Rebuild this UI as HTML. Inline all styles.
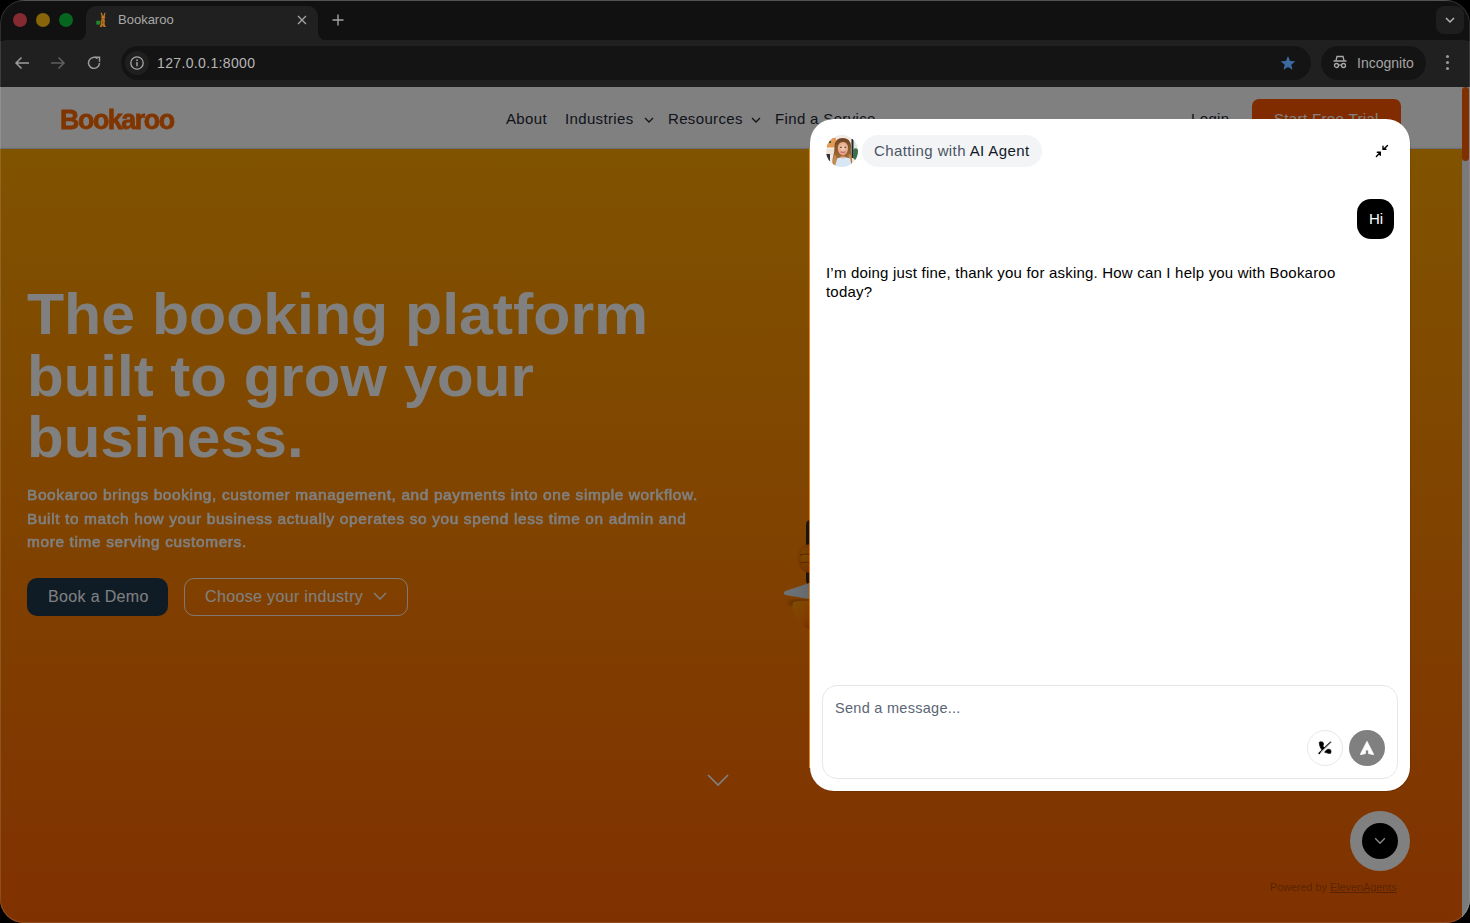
<!DOCTYPE html>
<html><head><meta charset="utf-8">
<style>
*{box-sizing:border-box;margin:0;padding:0}
html,body{width:1470px;height:923px;overflow:hidden;background:#000;font-family:"Liberation Sans",sans-serif}
.win{position:absolute;left:0;top:0;width:1470px;height:923px;border-radius:24px;overflow:hidden;background:#202020}
.abs{position:absolute}
/* chrome */
.tabstrip{left:0;top:0;width:1470px;height:41px;background:#111;border-top:1px solid #3a3a3a}
.tab{left:86px;top:6px;width:232px;height:35px;background:#202020;border-radius:10px 10px 0 0}
.toolbar{left:0;top:40px;width:1470px;height:47px;background:#202020;border-radius:6px 6px 0 0}
.omni{left:121px;top:46px;width:1190px;height:34px;background:#141414;border-radius:17px}
.page{left:0;top:87px;width:1470px;height:836px;overflow:hidden}
.nav{font-size:15px;color:#1f2937;line-height:16px;white-space:nowrap;letter-spacing:.35px}
.h1{font-size:57px;font-weight:700;color:#fff;line-height:62px;white-space:nowrap}
.para{font-size:14.8px;font-weight:400;color:#fff;line-height:20px;white-space:nowrap;letter-spacing:.62px;-webkit-text-stroke:.55px #fff;transform:scaleX(1.04);transform-origin:0 0}
.btxt{font-size:16px;color:#fff;line-height:20px;white-space:nowrap;letter-spacing:.35px}
.wt{font-size:15px;line-height:16px;white-space:nowrap}
.overlay{left:0;top:87px;width:1470px;height:836px;background:rgba(0,0,0,.498)}
</style></head>
<body>
<div class="win">

  <div class="abs tabstrip"></div>
  <div class="abs tab"></div>
  <!-- tab curves -->
  <div class="abs" style="left:76px;top:31px;width:10px;height:10px;background:radial-gradient(circle at 0 0,#111 10px,#202020 10.5px)"></div>
  <div class="abs" style="left:318px;top:31px;width:10px;height:10px;background:radial-gradient(circle at 100% 0,#111 10px,#202020 10.5px)"></div>
  <div class="abs" style="left:13px;top:13px;width:14px;height:14px;border-radius:50%;background:#852a30"></div>
  <div class="abs" style="left:36px;top:13px;width:14px;height:14px;border-radius:50%;background:#876508"></div>
  <div class="abs" style="left:59px;top:13px;width:14px;height:14px;border-radius:50%;background:#06651f"></div>
  <!-- favicon -->
  <svg class="abs" style="left:95px;top:12px" width="14" height="16" viewBox="0 0 14 16">
    <path d="M6.2 0.8 L7.3 4.2 M10 0.8 L9 4.2" stroke="#c27a22" stroke-width="1.2"/>
    <ellipse cx="8.2" cy="5.2" rx="1.9" ry="1.6" fill="#c27a22"/>
    <path d="M7 6.2 Q4.8 9 5.8 12.2 L4.6 15 H7 L7.6 13.4 L8.6 15 H11 L9.6 12 Q10.4 8.8 9.4 6.2Z" fill="#b8701c"/>
    <path d="M7.5 8.5 Q8 10.5 7.6 12" stroke="#7a4410" stroke-width=".8" fill="none"/>
    <rect x="1.3" y="8.8" width="3.8" height="3.8" fill="#1e8a2e"/>
  </svg>
  <div class="abs" style="left:118px;top:12px;font-size:13px;color:#a8a8a8;line-height:16px">Bookaroo</div>
  <svg class="abs" style="left:296px;top:14px" width="12" height="12" viewBox="0 0 12 12"><path d="M2 2L10 10M10 2L2 10" stroke="#a4a4a4" stroke-width="1.3"/></svg>
  <svg class="abs" style="left:331px;top:13px" width="14" height="14" viewBox="0 0 14 14"><path d="M7 1.5V12.5M1.5 7H12.5" stroke="#a4a4a4" stroke-width="1.4"/></svg>
  <div class="abs" style="left:1436px;top:6px;width:28px;height:28px;border-radius:8px;background:#1e1e1e"></div>
  <svg class="abs" style="left:1443px;top:13px" width="14" height="14" viewBox="0 0 14 14"><path d="M3 5L7 9L11 5" stroke="#b4b4b4" stroke-width="1.5" fill="none"/></svg>
  <div class="abs toolbar"></div>
  <!-- nav icons -->
  <svg class="abs" style="left:13px;top:54px" width="18" height="18" viewBox="0 0 18 18"><path d="M16 9H3M8.5 3.5L3 9L8.5 14.5" stroke="#9c9c9c" stroke-width="1.45" fill="none"/></svg>
  <svg class="abs" style="left:49px;top:54px" width="18" height="18" viewBox="0 0 18 18"><path d="M2 9H15M9.5 3.5L15 9L9.5 14.5" stroke="#5e5e5e" stroke-width="1.6" fill="none"/></svg>
  <svg class="abs" style="left:85px;top:54px" width="18" height="18" viewBox="0 0 18 18"><path d="M14.5 9A5.5 5.5 0 1 1 12.5 4.6" stroke="#9c9c9c" stroke-width="1.45" fill="none"/><path d="M10 3.2H14.5V7.7" stroke="#9c9c9c" stroke-width="1.45" fill="none"/></svg>
  <div class="abs omni"></div>
  <div class="abs" style="left:125px;top:51px;width:24px;height:24px;border-radius:50%;background:#1f1f1f"></div>
  <svg class="abs" style="left:130px;top:56px" width="14" height="14" viewBox="0 0 14 14"><circle cx="7" cy="7" r="6.2" stroke="#a8a8a8" stroke-width="1.3" fill="none"/><rect x="6.3" y="6" width="1.4" height="4.3" fill="#a8a8a8"/><circle cx="7" cy="4.2" r=".85" fill="#a8a8a8"/></svg>
  <div class="abs" style="left:157px;top:55px;font-size:14px;color:#b6b6b6;line-height:16px;letter-spacing:.35px">127.0.0.1:8000</div>
  <svg class="abs" style="left:1280px;top:55px" width="16" height="16" viewBox="0 0 16 16"><path d="M8 1L10.1 5.9L15.3 6.3L11.3 9.7L12.5 14.8L8 12.1L3.5 14.8L4.7 9.7L0.7 6.3L5.9 5.9Z" fill="#3a6aa0"/></svg>
  <div class="abs" style="left:1321px;top:46px;width:105px;height:34px;border-radius:17px;background:#141414"></div>
  <svg class="abs" style="left:1332px;top:54px" width="16" height="16" viewBox="0 0 16 16"><path d="M4 6.5L5 2.5H11L12 6.5" stroke="#a8a8a8" stroke-width="1.3" fill="none"/><path d="M1.5 7H14.5" stroke="#a8a8a8" stroke-width="1.3"/><circle cx="4.5" cy="11.5" r="2" stroke="#a8a8a8" stroke-width="1.3" fill="none"/><circle cx="11.5" cy="11.5" r="2" stroke="#a8a8a8" stroke-width="1.3" fill="none"/><path d="M6.5 11.3Q8 10.3 9.5 11.3" stroke="#a8a8a8" stroke-width="1.2" fill="none"/></svg>
  <div class="abs" style="left:1357px;top:55px;font-size:14px;color:#a4a4a4;line-height:16px">Incognito</div>
  <div class="abs" style="left:1446px;top:55px;width:3.2px;height:3.2px;border-radius:50%;background:#9a9a9a"></div>
  <div class="abs" style="left:1446px;top:61px;width:3.2px;height:3.2px;border-radius:50%;background:#9a9a9a"></div>
  <div class="abs" style="left:1446px;top:67px;width:3.2px;height:3.2px;border-radius:50%;background:#9a9a9a"></div>

  <!-- PAGE -->
  <div class="abs page">
    <div class="abs" style="left:0;top:62px;width:1462px;height:774px;background:linear-gradient(#FFA600,#FF6300)"></div>
    <div class="abs" style="left:0;top:0;width:1462px;height:62px;background:#fff;border-bottom:1px solid #d2dceb;box-shadow:inset 0 -2px 0 #fdfcf8"></div>
    <!-- scrollbar -->
    <div class="abs" style="left:1462px;top:0;width:8px;height:836px;background:#f4f4f4;border-left:1px solid #eef2f6"></div>
    <div class="abs" style="left:1462px;top:0;width:7px;height:74px;border-radius:4px;background:#ff6100"></div>
    <!-- nav -->
    <div class="abs" id="logo" style="left:60px;top:16.6px;font-size:28.5px;font-weight:700;color:#ff6a00;line-height:30px;letter-spacing:-1.5px;transform:scaleX(.94);transform-origin:0 0;-webkit-text-stroke:.8px #ff6a00">Bookaroo</div>
    <div class="abs nav" style="left:506px;top:24px">About</div>
    <div class="abs nav" style="left:565px;top:24px">Industries</div>
    <svg class="abs" style="left:643.5px;top:28.5px" width="10" height="8" viewBox="0 0 10 8"><path d="M1 2L5 6L9 2" stroke="#1f2937" stroke-width="1.3" fill="none"/></svg>
    <div class="abs nav" style="left:668px;top:24px">Resources</div>
    <svg class="abs" style="left:750.5px;top:28.5px" width="10" height="8" viewBox="0 0 10 8"><path d="M1 2L5 6L9 2" stroke="#1f2937" stroke-width="1.3" fill="none"/></svg>
    <div class="abs nav" style="left:775px;top:24px">Find a Service</div>
    <div class="abs nav" style="left:1191px;top:24px">Login</div>
    <div class="abs" style="left:1252px;top:12px;width:149px;height:38px;border-radius:7px;background:#ff5800"></div>
    <div class="abs nav" style="left:1274px;top:24px;color:#fff">Start Free Trial</div>

    <!-- hero -->
    <div class="abs h1" id="h1a" style="left:27px;top:196.25px;transform:scaleX(1.066);transform-origin:0 0">The booking platform</div>
    <div class="abs h1" id="h1b" style="left:27px;top:257.65px;transform:scaleX(1.053);transform-origin:0 0">built to grow your</div>
    <div class="abs h1" id="h1c" style="left:27px;top:318.95px;transform:scaleX(1.052);transform-origin:0 0">business.</div>
    <div class="abs para" id="p1" style="left:27px;top:398.2px">Bookaroo brings booking, customer management, and payments into one simple workflow.</div>
    <div class="abs para" id="p2" style="left:27px;top:421.5px">Built to match how your business actually operates so you spend less time on admin and</div>
    <div class="abs para" id="p3" style="left:27px;top:444.8px">more time serving customers.</div>
    <div class="abs" style="left:27px;top:491px;width:141px;height:38px;border-radius:10px;background:#1e384c"></div>
    <div class="abs btxt" id="b1" style="left:48px;top:500px">Book a Demo</div>
    <div class="abs" style="left:184px;top:491px;width:224px;height:38px;border-radius:10px;border:1px solid rgba(255,255,255,.9)"></div>
    <div class="abs btxt" id="b2" style="left:205px;top:500px">Choose your industry</div>
    <svg class="abs" style="left:372px;top:503px" width="16" height="12" viewBox="0 0 16 12"><path d="M2 3L8 9L14 3" stroke="#fff" stroke-width="1.4" fill="none"/></svg>
    <!-- hero chevron -->
    <svg class="abs" style="left:704px;top:684px" width="28" height="18" viewBox="0 0 28 18"><path d="M4 4L14 14L24 4" stroke="#fff" stroke-width="1.7" fill="none"/></svg>
    <!-- mascot partial -->
    <svg class="abs" style="left:770px;top:425px" width="45" height="130" viewBox="0 0 45 130">
      <defs><linearGradient id="tri" x1="0" x2="1"><stop offset="0" stop-color="#dfe8ef"/><stop offset="1" stop-color="#c2ccd4"/></linearGradient>
      <linearGradient id="foot" x1="0" y1="0" x2="1" y2="1"><stop offset="0" stop-color="#ff9800"/><stop offset=".6" stop-color="#ff7800"/><stop offset="1" stop-color="#d04800"/></linearGradient>
      <radialGradient id="hand" cx=".4" cy=".4" r=".7"><stop offset="0" stop-color="#ff9200"/><stop offset="1" stop-color="#e05a00"/></radialGradient>
      <filter id="bl"><feGaussianBlur stdDeviation="2"/></filter></defs>
      <ellipse cx="32" cy="91" rx="14" ry="3" fill="#000" opacity=".35" filter="url(#bl)"/>
      <path d="M40 8 Q36 8 36 14 V68 Q36 73 40 73 H45 V8Z" fill="#2a2a2e"/>
      <path d="M45 32.5 Q29 30 27.5 45 Q28 60 40 61 L45 61Z" fill="url(#hand)"/>
      <path d="M30 43 Q36 41 45 43 M30.5 51 Q37 49 45 52" stroke="#b04800" stroke-width="1.1" fill="none"/>
      <path d="M45 69 L15.5 79 Q12 81 15.5 83 L45 88Z" fill="url(#tri)"/>
      <path d="M23 90 Q30 88 45 89 V120 Q32 116 26 104 Q21 95 23 90Z" fill="url(#foot)"/>
    </svg>
  </div>
  <div class="abs overlay"></div>
  <div class="abs" style="left:809px;top:148px;width:1.5px;height:620px;background:#ff9a1a;opacity:.8"></div>

  <!-- WIDGET -->
  <div class="abs" style="left:810px;top:119px;width:600px;height:672px;background:#fff;border-radius:24px;box-shadow:.8px .8px 0 rgba(0,0,0,.14)"></div>
  <svg class="abs" style="left:826px;top:135px" width="32" height="32" viewBox="0 0 32 32">
    <defs><clipPath id="av"><circle cx="16" cy="16" r="16"/></clipPath>
    <radialGradient id="face" cx=".5" cy=".45" r=".6"><stop offset="0" stop-color="#f6cbb0"/><stop offset="1" stop-color="#dca080"/></radialGradient>
    <linearGradient id="hair" x1="0" y1="0" x2="0" y2="1"><stop offset="0" stop-color="#6e4424"/><stop offset=".5" stop-color="#94602e"/><stop offset="1" stop-color="#b88048"/></linearGradient>
    <filter id="sb"><feGaussianBlur stdDeviation=".35"/></filter></defs>
    <g clip-path="url(#av)" filter="url(#sb)">
      <rect width="32" height="32" fill="#f3ebe4"/>
      <rect x="1" y="3" width="9" height="10" fill="#e39a55"/>
      <rect x="0" y="12.5" width="10" height="1.5" fill="#f7f0ea"/>
      <rect x="1" y="14" width="8" height="6" fill="#ece2d8"/>
      <rect x="0" y="19" width="4" height="7" fill="#2e3440"/>
      <rect x="3" y="6" width="2" height="2" fill="#2f5a30"/>
      <rect x="25.5" y="4" width="2.2" height="19" fill="#22262b"/>
      <rect x="27.7" y="4" width="4.3" height="11" fill="#dfe7e2"/>
      <path d="M27.5 14 Q31 12 32 15 V26 L27.5 24Z" fill="#3e6e4c"/>
      <path d="M16.5 3 Q9 3 8.5 11 Q8.5 17 7 22 Q5.5 27 7.5 31 L11 32 H22 L25.5 31 Q27 26 25.5 21 Q24.5 16 25 11 Q24.5 3 16.5 3Z" fill="url(#hair)"/>
      <path d="M8.5 20 Q6 25 8 30 L11 30 Q9.5 25 10.5 21Z M24 19 Q26.5 24 25 30 L22.5 30 Q24 25 22.5 20Z" fill="#c48c52"/>
      <path d="M11.8 13.5 Q11.6 7 17 7 Q22.2 7 22 13.5 Q21.8 19 17 20.6 Q12 19 11.8 13.5Z" fill="url(#face)"/>
      <path d="M14.6 16.6 Q17 18.6 19.4 16.6" stroke="#d26a7a" stroke-width="1.3" fill="none"/>
      <path d="M14 12.3h1.8M18.4 12.3h1.8" stroke="#5a3a3a" stroke-width="1"/>
      <path d="M11 23.5 Q17 21 24 23.5 L26 32 H9Z" fill="#d8e6f6"/>
      <path d="M14.5 21.5 Q16.8 26 19 21.5Z" fill="#e6b598"/>
    </g>
  </svg>
  <div class="abs" style="left:862px;top:135px;width:180px;height:32px;border-radius:16px;background:#f3f4f6"></div>
  <div class="abs wt" id="pill" style="left:874px;top:142.5px;letter-spacing:.4px;color:#4b5563">Chatting with <span style="color:#111827">AI Agent</span></div>
  <svg class="abs" style="left:1372px;top:141px" width="20" height="20" viewBox="0 0 20 20">
    <path d="M15.5 4.4L11.7 8.2M11 5.3V8.3H14M4.4 15.4L7.9 11.8M5.3 11.3H8.3V14.3" stroke="#000" stroke-width="1.4" fill="none" stroke-linecap="round"/>
  </svg>
  <div class="abs" style="left:1357px;top:199px;width:37px;height:40px;border-radius:14px;background:#000"></div>
  <div class="abs wt" id="hi" style="left:1369px;top:210.7px;color:#fff">Hi</div>
  <div class="abs wt" id="msg1" style="left:826px;top:262.8px;letter-spacing:.2px;color:#000;line-height:20px">I’m doing just fine, thank you for asking. How can I help you with Bookaroo</div>
  <div class="abs wt" id="msg2" style="left:826px;top:282.4px;letter-spacing:.2px;color:#000;line-height:20px">today?</div>
  <div class="abs" style="left:822px;top:685px;width:576px;height:94px;border-radius:15px;border:1px solid #e5e7eb"></div>
  <div class="abs wt" id="ph" style="left:835px;top:699.5px;font-size:14.5px;letter-spacing:.28px;color:#5b6575">Send a message...</div>
  <div class="abs" style="left:1307px;top:730px;width:36px;height:36px;border-radius:50%;border:1px solid #e5e7eb"></div>
  <svg class="abs" style="left:1315px;top:738px" width="20" height="20" viewBox="0 0 20 20">
    <path d="M4.3 4.7 Q4.2 3.8 5.4 3.8 L7.4 4 Q8.6 4.4 8.5 6.3 Q8.4 7.4 7.7 8.1 L9.5 9.8 L7.4 12.3 Q5.4 10.4 4.7 7.6Z" fill="#000" stroke="#000" stroke-width=".7" stroke-linejoin="round"/>
    <path d="M9.5 14.1 L11.9 11.8 Q12.6 11.1 14 11.2 Q15.9 11.5 16 13 L15.8 14.9 Q15.6 15.6 14.5 15.5 Q11.6 15.1 9.5 14.1Z" fill="#000" stroke="#000" stroke-width=".7" stroke-linejoin="round"/>
    <path d="M4.1 15.4L15.6 4.3" stroke="#000" stroke-width="1.5" stroke-linecap="round"/>
    <path d="M5.5 14.6L16 4.6" stroke="#fff" stroke-width=".8"/>
  </svg>
  <div class="abs" style="left:1349px;top:730px;width:36px;height:36px;border-radius:50%;background:#808080"></div>
  <svg class="abs" style="left:1357px;top:738px" width="20" height="20" viewBox="0 0 20 20">
    <path d="M10 3.2 L16.5 16 Q16.8 16.8 15.9 16.6 L11.5 15.6 V12.1 H8.5 V15.6 L4.1 16.6 Q3.2 16.8 3.5 16Z" fill="#fff" stroke="#fff" stroke-width=".7" stroke-linejoin="round"/>
  </svg>
  <!-- floating btn -->
  <div class="abs" style="left:1350px;top:811px;width:60px;height:60px;border-radius:50%;background:#808080"></div>
  <div class="abs" style="left:1362px;top:823px;width:36px;height:36px;border-radius:50%;background:#000"></div>
  <svg class="abs" style="left:1372px;top:833px" width="16" height="16" viewBox="0 0 16 16"><path d="M3.2 5.2L8 10.2L12.8 5.2" stroke="#8a8a8a" stroke-width="1.3" fill="none"/></svg>
  <div class="abs" id="pw" style="left:1270px;top:880.5px;font-size:10.8px;line-height:12px;color:rgba(40,15,0,.45);white-space:nowrap">Powered by <span style="text-decoration:underline">ElevenAgents</span></div>
  <div class="abs" style="left:0;top:0;width:1470px;height:923px;border-radius:24px;box-shadow:inset 0 0 0 1px rgba(255,255,255,.13);pointer-events:none"></div>
</div>
</body></html>
